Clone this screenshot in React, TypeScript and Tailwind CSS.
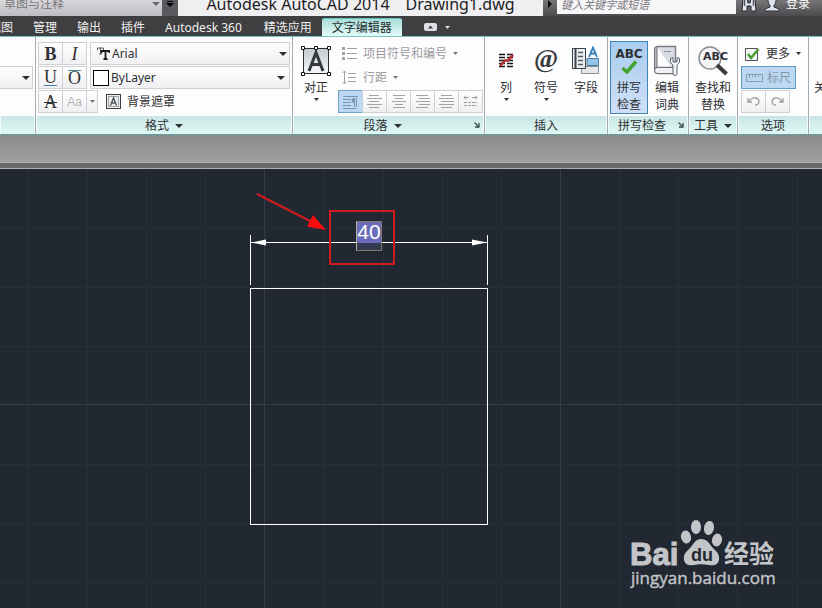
import type { ReactNode } from "react";
import clsx from "clsx";

const tabs = ["视图", "管理", "输出", "插件", "Autodesk 360", "精选应用", "文字编辑器"];
const activeTab = "文字编辑器";

// minor grid lines of the model space, every fifth one is major
const gridX = [28, 87, 146, 205, 264, 324, 383, 442, 501, 560, 619, 678, 737, 797];
const gridY = [58, 117, 176, 234, 294, 353, 412];
const majorX = [264, 560];
const majorY = [234];

function Caret({ small, className }: { small?: boolean; className?: string }) {
  return small ? (
    <svg width="5" height="3" viewBox="0 0 5 3" className={clsx("shrink-0", className)} aria-hidden="true">
      <path d="M0 0h5L2.500 3z" fill="currentColor" />
    </svg>
  ) : (
    <svg width="8" height="4" viewBox="0 0 8 4" className={clsx("shrink-0", className)} aria-hidden="true">
      <path d="M0 0h8L4 4z" fill="currentColor" />
    </svg>
  );
}

function Launcher() {
  return (
    <svg width="6" height="6" viewBox="0 0 6 6" className="text-[#3c4a4c]" aria-hidden="true">
      <path d="M0.500 0.500 4 4M5 1v4H1" fill="none" stroke="currentColor" strokeWidth="1.300" />
    </svg>
  );
}

interface PanelProps {
  title?: string;
  className: string;
  caret?: boolean;
  launcher?: boolean;
  children?: ReactNode;
}

function Panel({ title, className, caret, launcher, children }: PanelProps) {
  return (
    <section className={clsx("flex flex-col border-r border-[#a3adaf]", className)}>
      <div className="h-[79px] overflow-hidden pt-[5px]">{children}</div>
      <div className="flex h-[18px] items-center border-r border-l border-[#f2fbfb] bg-linear-to-b from-[#c9e6e4] to-[#dff8f6]">
        <h2 className="flex flex-1 items-center justify-center gap-1.5 pt-0.5 whitespace-nowrap">
          {title}
          {caret && <Caret />}
        </h2>
        {launcher && (
          <button type="button" aria-label={title + "设置"} className="flex w-3 justify-center">
            <Launcher />
          </button>
        )}
      </div>
    </section>
  );
}

interface BigButtonProps {
  icon: ReactNode;
  lines: string[];
  className: string;
  menu?: boolean;
  active?: boolean;
}

function BigButton({ icon, lines, className, menu, active }: BigButtonProps) {
  return (
    <button
      type="button"
      aria-pressed={active}
      className={clsx(
        "-mt-px flex h-[73px] shrink-0 flex-col border",
        active ? "border-[#3f86b8] bg-linear-to-b from-[#a9cdee] to-[#cfdff8]" : "border-transparent",
        className
      )}
    >
      <span className="flex h-[37px] shrink-0 items-center justify-center">{icon}</span>
      {lines.map((line) => (
        <span key={line} className="leading-[17px] whitespace-nowrap">
          {line}
        </span>
      ))}
      {menu && <Caret small className="mt-0.5" />}
    </button>
  );
}

interface ToolButtonProps {
  label: string;
  className?: string;
  active?: boolean;
  children: ReactNode;
}

function ToolButton({ label, className = "w-[25px]", active, children }: ToolButtonProps) {
  return (
    <button
      type="button"
      aria-label={label}
      className={clsx(
        "-mr-px flex h-[23px] shrink-0 items-center justify-center border",
        active ? "border-[#6fa3c8] bg-[#bcd9f3]" : "border-[#d0d0d4] bg-linear-to-b from-white to-[#efeff2]",
        className
      )}
    >
      {children}
    </button>
  );
}

function AlignIcon({ rows }: { rows: [number, number][] }) {
  return (
    <svg width="16" height="14" viewBox="0 0 16 14" stroke="#a2a2a6" aria-hidden="true">
      {rows.map(([from, to], i) => (
        <path key={i} d={`M${from} ${i * 3 + 0.5}H${to}`} />
      ))}
    </svg>
  );
}

const alignments: { label: string; rows: [number, number][] }[] = [
  { label: "左对齐", rows: [[2, 12], [0, 15], [2, 12], [0, 15], [2, 12]] },
  { label: "居中", rows: [[2, 14], [4, 12], [1, 15], [4, 12], [2, 14]] },
  { label: "右对齐", rows: [[1, 13], [4, 15], [1, 15], [4, 15], [1, 13]] },
  { label: "对正", rows: [[2, 13], [0, 15], [2, 15], [0, 15], [2, 13]] },
];

function TitleBar() {
  return (
    <header className="flex h-4 items-end overflow-hidden bg-linear-to-b from-[#77777a] to-[#4b4a4d]">
      <div className="flex h-6 w-[162px] shrink-0 items-center bg-linear-to-b from-[#e6e6e8] to-[#bdbdc2] pr-0.5 text-[#69696e]">
        <select aria-label="工作空间" className="h-6 flex-1 appearance-none pl-1 text-xs text-[#77777c] outline-none">
          <option>草图与注释</option>
        </select>
        <Caret />
      </div>
      <button type="button" aria-label="自定义快速访问工具栏" className="flex h-6 w-4 shrink-0 flex-col items-center justify-center gap-px bg-[#5b5a5e] text-black">
        <span className="h-px w-1.5 bg-black" />
        <Caret />
      </button>
      <h1 className="flex h-6 w-[365px] shrink-0 items-center justify-center gap-4 bg-[#efeef0] text-base whitespace-nowrap text-[#1c1c1e]">
        <span>Autodesk AutoCAD 2014</span>
        <span>Drawing1.dwg</span>
      </h1>
      <button type="button" aria-label="展开搜索" className="flex h-6 w-3.5 shrink-0 items-center justify-center">
        <svg width="4" height="8" viewBox="0 0 4 8" aria-hidden="true">
          <path d="M0 0l4 4-4 4z" fill="#0d0d0e" />
        </svg>
      </button>
      <input
        aria-label="搜索"
        placeholder="键入关键字或短语"
        className="mb-0.5 h-5 w-[179px] shrink-0 bg-[#f7f6f8] pl-1 text-[11px] italic outline-none placeholder:text-[#77777b]"
      />
      <button type="button" aria-label="查找" className="flex h-6 w-[26px] shrink-0 items-end justify-center pb-1">
        <svg width="16" height="14" viewBox="0 0 16 14" aria-hidden="true">
          <path d="M2 0h4l1 5h2l1-5h4l1 13h-5V8H6v5H1z" fill="#dfe5ee" stroke="#29292c" />
          <path d="M3.500 2v6M12.500 2v6" stroke="#55585f" strokeWidth="1.500" />
        </svg>
      </button>
      <button type="button" className="flex h-6 shrink-0 items-center gap-1.5 pl-0.5 text-xs text-white">
        <svg width="16" height="16" viewBox="0 0 16 16" aria-hidden="true">
          <path d="M8 0c3 0 4 2 4 4.500S10.500 9 10 9.500V11l5 2v2H1v-2l5-2V9.500C5.500 9 4 7 4 4.500S5 0 8 0z" fill="#dde4f0" stroke="#2c2c30" />
        </svg>
        登录
      </button>
    </header>
  );
}

function TabBar() {
  return (
    <nav className="flex h-5 items-end overflow-hidden bg-[#3f3e40]">
      <div className="-ml-[21px] flex" role="tablist">
        {tabs.map((tab) => (
          <button
            key={tab}
            type="button"
            role="tab"
            aria-selected={tab === activeTab}
            className={clsx(
              "h-[18px] pl-2.5 leading-[17px] whitespace-nowrap",
              tab === "Autodesk 360" ? "pr-3" : "pr-2.5",
              tab === activeTab
                ? "rounded-t-xs border-t border-[#5fc5c0] bg-linear-to-b from-[#a9dcd8] to-[#e4fbfa] text-[#1d2b2c]"
                : "text-[#f0f0f0]"
            )}
          >
            {tab}
          </button>
        ))}
      </div>
      <button type="button" aria-label="最小化功能区" className="ml-[22px] flex h-[18px] items-center gap-2 text-[#dfe0e6]">
        <svg width="13" height="8" viewBox="0 0 13 8" aria-hidden="true">
          <rect width="13" height="8" rx="2" fill="#dfe0e6" />
          <path d="M4 5.500h5L6.500 2.500z" fill="#3f3e40" />
        </svg>
        <Caret small />
      </button>
    </nav>
  );
}

function FormatPanel() {
  return (
    <Panel title="格式" caret className="w-[257px] shrink-0">
      <div className="flex flex-col gap-px pl-0.5">
        <div className="flex">
          <ToolButton label="粗体">
            <b className="font-['Liberation_Serif',serif] text-lg leading-none">B</b>
          </ToolButton>
          <ToolButton label="斜体">
            <i className="font-['Liberation_Serif',serif] text-lg leading-none">I</i>
          </ToolButton>
          <label className="ml-1 flex h-[23px] w-[200px] items-center border border-[#cfcfd3] bg-linear-to-b from-white to-[#f0f0f3] pr-0.5 pl-1.5">
            <svg width="13" height="13" viewBox="0 0 13 13" aria-hidden="true">
              <path d="M0.500 3V1h6v2M3.500 1v6M2 7h3" fill="none" stroke="#55565a" />
              <path d="M4.500 6V4h8v2M8.500 4v8M6.500 12h4" fill="none" stroke="#1b1b1d" strokeWidth="1.800" />
            </svg>
            <select aria-label="字体" className="ml-0.5 flex-1 appearance-none outline-none">
              <option>Arial</option>
            </select>
            <Caret />
          </label>
        </div>
        <div className="flex">
          <ToolButton label="下划线">
            <span className="border-b border-[#3c7fae] font-['Liberation_Serif',serif] text-lg leading-[15px]">U</span>
          </ToolButton>
          <ToolButton label="上划线">
            <span className="border-t border-[#3c8f9e] font-['Liberation_Serif',serif] text-lg leading-[15px]">O</span>
          </ToolButton>
          <label className="ml-1 flex h-[23px] w-[200px] items-center border border-[#cfcfd3] bg-linear-to-b from-white to-[#f0f0f3] pr-1 pl-0.5">
            <span className="size-4 border border-black bg-white" />
            <select aria-label="颜色" className="ml-0.5 flex-1 appearance-none outline-none">
              <option>ByLayer</option>
            </select>
            <Caret />
          </label>
        </div>
        <div className="flex items-center">
          <ToolButton label="删除线">
            <span className="font-['Liberation_Serif',serif] text-lg leading-none line-through">A</span>
          </ToolButton>
          <ToolButton label="更改大小写">
            <span className="font-['Liberation_Sans',sans-serif] text-[#b4b4b8]">Aa</span>
          </ToolButton>
          <ToolButton label="大小写选项" className="w-3">
            <Caret small className="text-[#77777b]" />
          </ToolButton>
          <button type="button" className="ml-2 flex items-center gap-1.5 pl-px">
            <svg width="15" height="15" viewBox="0 0 15 15" aria-hidden="true">
              <rect x="0.500" y="0.500" width="14" height="14" fill="#eceef0" stroke="#3b3e42" />
              <rect x="2.500" y="2.500" width="10" height="10" fill="none" stroke="#55585c" strokeDasharray="1 1" />
              <path d="M4.500 11.500 7.500 4l3 7.500M5.500 9h4" fill="none" stroke="#53575c" strokeWidth="1.400" />
            </svg>
            背景遮罩
          </button>
        </div>
      </div>
    </Panel>
  );
}

function ParagraphPanel() {
  return (
    <Panel title="段落" caret launcher className="w-[192px] shrink-0">
      <div className="flex">
        <BigButton
          className="ml-1 w-[38px] items-center"
          lines={["对正"]}
          menu
          icon={
            <svg width="30" height="30" viewBox="0 0 30 30" aria-hidden="true">
              <defs>
                <linearGradient id="justify" x2="0" y2="1">
                  <stop stopColor="#c6cad1" />
                  <stop offset="1" stopColor="#f6f7f9" />
                </linearGradient>
              </defs>
              <rect x="2.500" y="2.500" width="25" height="25" fill="url(#justify)" stroke="#2c2d30" />
              <path d="M8 25 15 6.500 22 25M10 18.500h10" fill="none" stroke="#35383c" strokeWidth="3" />
              <g fill="#fff" stroke="#111">
                <path d="M0.500 0.500h3v3h-3zM13.500 0.500h3v3h-3zM26.500 0.500h3v3h-3zM0.500 26.500h3v3h-3zM26.500 26.500h3v3h-3z" />
              </g>
            </svg>
          }
        />
        <div className="flex flex-col gap-px pl-[3px] text-[#9b9b9f]">
          <button type="button" className="flex h-[23px] items-center gap-1.5 pl-1">
            <svg width="15" height="13" viewBox="0 0 15 13" stroke="#a2a2a6" aria-hidden="true">
              <path d="M5 1.500h10M5 6.500h10M5 11.500h10" />
              <path d="M0 1.500h3M0 6.500h3M0 11.500h3" strokeWidth="3" />
            </svg>
            项目符号和编号
            <Caret small className="text-[#77777b]" />
          </button>
          <button type="button" className="flex h-[23px] items-center gap-1.5 pl-1">
            <svg width="15" height="15" viewBox="0 0 15 15" fill="none" stroke="#a2a2a6" aria-hidden="true">
              <path d="M2.500 1v13M0.500 3l2-2 2 2M0.500 12l2 2 2-2M6 3.500h8M6 7.500h8M6 11.500h8" />
            </svg>
            行距
            <Caret small className="text-[#77777b]" />
          </button>
          <div className="flex">
            <ToolButton label="默认" active>
              <svg width="16" height="14" viewBox="0 0 16 14" fill="none" stroke="#7894ac" aria-hidden="true">
                <path d="M0 1.500h15M0 4.500h8M0 7.500h8M0 10.500h8M0 13.500h13M11.500 3v9M13.500 3v9" />
                <path d="M11 3.500a2 2 0 0 0 0 4z" fill="#7894ac" />
              </svg>
            </ToolButton>
            {alignments.map((item) => (
              <ToolButton key={item.label} label={item.label}>
                <AlignIcon rows={item.rows} />
              </ToolButton>
            ))}
            <ToolButton label="分散对齐">
              <svg width="15" height="14" viewBox="0 0 15 14" fill="none" stroke="#9b9b9f" aria-hidden="true">
                <path d="M1 2.500h5M9 2.500h5M3 0.500l-2 2 2 2M12 0.500l2 2-2 2" />
                <path d="M1 7.500h13M1 10.500h13" strokeDasharray="3 1" />
              </svg>
            </ToolButton>
          </div>
        </div>
      </div>
    </Panel>
  );
}

function InsertPanel() {
  return (
    <Panel title="插入" className="w-[123px] shrink-0">
      <div className="flex pl-0.5">
        <BigButton
          className="w-[38px] items-center"
          lines={["列"]}
          menu
          icon={
            <svg width="15" height="15" viewBox="0 0 15 15" aria-hidden="true">
              <path d="M0 1.500h6M0 4.500h6M0 7.500h6M0 10.500h6M0 13.500h6M8 1.500h6M8 4.500h6M8 7.500h6M8 10.500h6M8 13.500h6" stroke="#151517" strokeWidth="1.400" />
              <path d="M1 13 6 7.500h3L14 2" fill="none" stroke="#b3322e" strokeWidth="2.600" />
            </svg>
          }
        />
        <BigButton
          className="w-[42px] items-center"
          lines={["符号"]}
          menu
          icon={<b className="pb-1 font-['Liberation_Serif',serif] text-[26px] leading-none text-[#3a3b3e]">@</b>}
        />
        <BigButton
          className="w-[38px] items-center"
          lines={["字段"]}
          icon={
            <svg width="30" height="30" viewBox="0 0 30 30" aria-hidden="true">
              <path d="M10.500 20.500h17v7h-17z" fill="#e4e6ea" stroke="#8b8f95" />
              <path d="M16 12.500h11.500v7H16z" fill="#94c5e8" stroke="#4c7ba0" />
              <rect x="1.500" y="2.500" width="13" height="20" fill="#eceef2" stroke="#3c4249" />
              <path d="M4.500 2v21" stroke="#3c4249" strokeWidth="2" />
              <path d="M7 6.500h5M7 10.500h5M7 14.500h5M7 18.500h5" stroke="#555a61" strokeWidth="1.400" />
              <path d="M18 11 22 1.500 26 11M19.500 7.500h5" fill="none" stroke="#2f7db9" strokeWidth="1.800" />
            </svg>
          }
        />
      </div>
    </Panel>
  );
}

function SpellingPanel() {
  return (
    <Panel title="拼写检查" launcher className="w-[81px] shrink-0">
      <div className="flex pl-0.5">
        <BigButton
          className="w-[38px] items-center"
          active
          lines={["拼写", "检查"]}
          icon={
            <span className="flex flex-col items-center font-['DejaVu_Sans',sans-serif] text-xs leading-3 font-bold">
              ABC
              <svg width="17" height="14" viewBox="0 0 17 14" aria-hidden="true">
                <path d="M1.500 8 6 12 15 1.500" fill="none" stroke="#43a52f" strokeWidth="3.500" />
              </svg>
            </span>
          }
        />
        <BigButton
          className="w-[38px] items-center"
          lines={["编辑", "词典"]}
          icon={
            <svg width="28" height="32" viewBox="0 0 28 32" aria-hidden="true">
              <path d="M4 1.500h18.500v21H5a3 3 0 0 0 0 6h17.500" fill="#d9dce3" stroke="#7b7f87" strokeWidth="1.400" />
              <path d="M4.500 22.500H22.500v6H4.500a3 3 0 0 1 0-6z" fill="#f1f2f5" stroke="#6f737b" />
              <path d="M1.500 26V4A2.500 2.500 0 0 1 4 1.500V22.500c-1.500 0-2.500 1.500-2.500 3z" fill="#b4b8c0" stroke="#6f737b" />
              <path d="M11 6.500h7" stroke="#8c9097" />
              <path d="M17.500 13.500v4l2.500 2.500v8.500a2 2 0 0 0 4 0V20l2.500-2.500v-4l-2.500-1v4.500h-4v-4.500z" fill="#f3f5f8" stroke="#5b6570" />
            </svg>
          }
        />
      </div>
    </Panel>
  );
}

function ToolsPanel() {
  return (
    <Panel title="工具" caret className="w-[49px] shrink-0">
      <BigButton
        className="w-full items-center"
        lines={["查找和", "替换"]}
        icon={
          <svg width="32" height="32" viewBox="0 0 32 32" aria-hidden="true">
            <circle cx="13" cy="13" r="11" fill="#f4f5f7" stroke="#8b8e94" strokeWidth="1.500" />
            <path d="M20 20l9.500 9" stroke="#3b3c40" strokeWidth="4" />
            <text x="6" y="15" fontFamily="DejaVu Sans, sans-serif" fontWeight="bold" fontSize="11" fill="#303236">
              ABC
            </text>
          </svg>
        }
      />
    </Panel>
  );
}

function OptionsPanel() {
  return (
    <Panel title="选项" className="w-[71px] shrink-0">
      <div className="flex flex-col gap-px pl-[3px]">
        <button type="button" className="flex h-[23px] items-center gap-1.5 pl-1">
          <svg width="15" height="14" viewBox="0 0 15 14" aria-hidden="true">
            <path d="M0.500 1.500h12v12H0.500z" fill="#f4f6f4" stroke="#505357" />
            <path d="M3 7l3 4 7.500-9" fill="none" stroke="#4b9c34" strokeWidth="2.600" />
          </svg>
          更多
          <Caret small />
        </button>
        <button type="button" aria-pressed="true" className="flex h-[23px] w-[55px] items-center justify-center gap-1 border border-[#5e9cc8] bg-[#bcd7f2] text-[#8497a8]">
          <svg width="17" height="8" viewBox="0 0 17 8" fill="none" stroke="#8a9cad" aria-hidden="true">
            <path d="M0.500 0.500h16v7H0.500zM3.500 1v3M6.500 1v2M9.500 1v3M12.500 1v2" />
          </svg>
          标尺
        </button>
        <div className="flex">
          <ToolButton label="放弃">
            <svg width="13" height="9" viewBox="0 0 13 9" fill="none" stroke="#a2a2a6" aria-hidden="true">
              <path d="M1 1v4h4M1.500 4.500C4 1.500 7 0.500 9 1s3 2 3 3.500S10.500 8 9 8H8" strokeWidth="1.300" />
            </svg>
          </ToolButton>
          <ToolButton label="重做">
            <svg width="13" height="9" viewBox="0 0 13 9" fill="none" stroke="#a2a2a6" aria-hidden="true">
              <path d="M12 1v4H8M11.500 4.500C9 1.500 6 0.500 4 1S1 3 1 4.500 2.500 8 4 8h1" strokeWidth="1.300" />
            </svg>
          </ToolButton>
        </div>
      </div>
    </Panel>
  );
}

function Watermark() {
  return (
    <svg width="150" height="76" viewBox="0 0 150 76" fill="#c3c5c9" className="absolute right-[42px] bottom-[14px]" aria-label="Baidu 经验">
      <text x="0" y="47" fontFamily="Liberation Sans, sans-serif" fontWeight="bold" fontSize="31" stroke="#c3c5c9">
        Bai
      </text>
      <ellipse cx="56" cy="19" rx="5" ry="6.500" transform="rotate(-12 56 19)" />
      <ellipse cx="66" cy="9" rx="5" ry="7" />
      <ellipse cx="79" cy="10" rx="5" ry="7" transform="rotate(10 79 10)" />
      <ellipse cx="87" cy="22" rx="5" ry="6.500" transform="rotate(12 87 22)" />
      <path d="M71 21c6 0 8 4 11 8 4 4 8 7 7 13-1 5-6 6-10 5-5-1-11-1-15 0s-9 0-10-5c-1-6 3-9 7-13 3-4 5-8 10-8z" />
      <text x="61" y="43" fontFamily="Liberation Sans, sans-serif" fontWeight="bold" fontSize="18" fill="#232830">
        du
      </text>
      <text x="94" y="45" fontFamily="Noto Sans CJK SC, sans-serif" fontWeight="bold" fontSize="25">
        经验
      </text>
      <text x="1" y="66" fontFamily="Open Sans, sans-serif" fontWeight="500" fontSize="17" stroke="#c3c5c9" strokeWidth="0.400">
        jingyan.baidu.com
      </text>
    </svg>
  );
}

function DrawingArea() {
  return (
    <main className="relative min-h-[438px] flex-1 overflow-hidden bg-[#222831]">
      <svg className="absolute inset-0 size-full" aria-hidden="true">
        <g stroke="#282f38">
          {gridX.map((x) => (
            <line key={x} x1={x + 0.5} x2={x + 0.5} y1="0" y2="100%" stroke={majorX.includes(x) ? "#363c47" : undefined} />
          ))}
          {gridY.map((y) => (
            <line key={y} x1="0" x2="100%" y1={y + 0.5} y2={y + 0.5} stroke={majorY.includes(y) ? "#363c47" : undefined} />
          ))}
        </g>
        {/* square and its dimension line */}
        <g fill="none" stroke="#fff">
          <rect x="250.500" y="118.500" width="237" height="236" />
          <path d="M250.500 65v50M487.500 65v50M251 72.500h105M382 72.500h105" />
        </g>
        <path d="M251 72.500 266 69.500v6zM487 72.500 472 69.500v6z" fill="#fff" />
        {/* red callout */}
        <rect x="330" y="41" width="64" height="53" fill="none" stroke="#cf1c1c" strokeWidth="2" />
        <path d="M257 24 312 52" stroke="#cf1c1c" strokeWidth="2" />
        <path d="M326 60 307 56.500 313 45z" fill="#fb0d0d" />
      </svg>
      <div className="absolute top-[51px] left-[356px] h-[30px] w-[26px] border border-[#7d7868] border-l-[#b5af9a] bg-[#343b50]">
        <input
          aria-label="标注文字"
          defaultValue="40"
          className="block h-[21px] w-full bg-[#6a6bbb] pb-0.5 text-center font-['Liberation_Sans',sans-serif] text-[21px] leading-[19px] text-white outline-none"
        />
      </div>
      <Watermark />
    </main>
  );
}

export default function App() {
  return (
    <div className="flex min-h-screen flex-col overflow-hidden bg-[#222831] font-['Noto_Sans','Noto_Sans_CJK_SC',sans-serif] text-xs text-[#2e3033]">
      <TitleBar />
      <TabBar />
      <div className="flex h-[99px] overflow-hidden border-t border-b border-t-[#7cc4c2] border-b-[#5f9fa0] bg-[#fdfdfd]">
        <Panel className="w-9 shrink-0">
          <div className="h-6" />
          <label className="flex h-[23px] w-[33px] items-center border border-l-0 border-[#cfcfd3] bg-linear-to-b from-white to-[#f0f0f3] pr-0.5">
            <select aria-label="文字高度" className="w-6 flex-1 appearance-none outline-none" />
            <Caret />
          </label>
        </Panel>
        <FormatPanel />
        <ParagraphPanel />
        <InsertPanel />
        <SpellingPanel />
        <ToolsPanel />
        <OptionsPanel />
        <Panel className="min-w-[50px] flex-1">
          <BigButton className="ml-1 w-[38px] items-start" lines={["关闭"]} icon={null} />
        </Panel>
      </div>
      <div className="h-[27px] bg-linear-to-b from-[#8a898c] to-[#a09fa2]" />
      <div className="mb-px h-[7px] border-t border-b border-[#b0afb2] bg-[#6b696c]" />
      <DrawingArea />
    </div>
  );
}
